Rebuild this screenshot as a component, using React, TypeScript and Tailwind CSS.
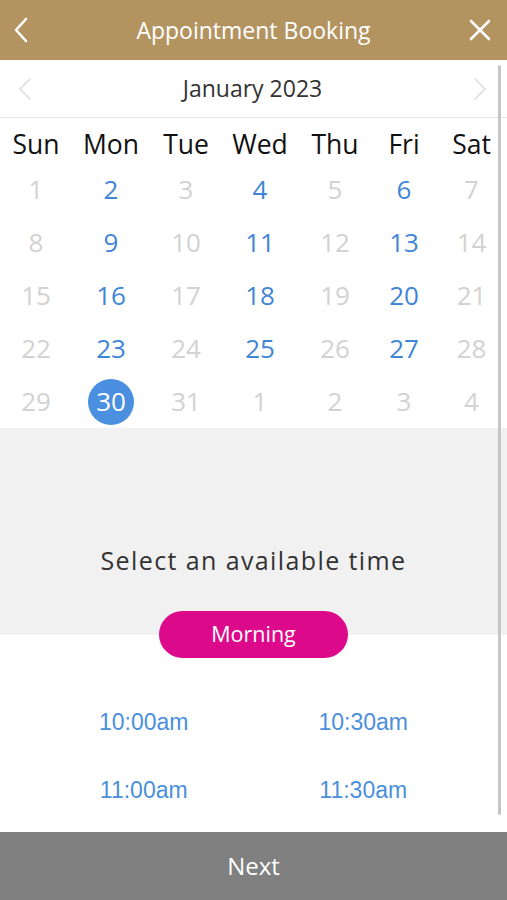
const days = ["Sun", "Mon", "Tue", "Wed", "Thu", "Fri", "Sat"];

type Cell = { n: number; on?: boolean; sel?: boolean };

const weeks: Cell[][] = [
  [{ n: 1 }, { n: 2, on: true }, { n: 3 }, { n: 4, on: true }, { n: 5 }, { n: 6, on: true }, { n: 7 }],
  [{ n: 8 }, { n: 9, on: true }, { n: 10 }, { n: 11, on: true }, { n: 12 }, { n: 13, on: true }, { n: 14 }],
  [{ n: 15 }, { n: 16, on: true }, { n: 17 }, { n: 18, on: true }, { n: 19 }, { n: 20, on: true }, { n: 21 }],
  [{ n: 22 }, { n: 23, on: true }, { n: 24 }, { n: 25, on: true }, { n: 26 }, { n: 27, on: true }, { n: 28 }],
  [{ n: 29 }, { n: 30, sel: true }, { n: 31 }, { n: 1 }, { n: 2 }, { n: 3 }, { n: 4 }],
];

const times = ["10:00am", "10:30am", "11:00am", "11:30am"];

export default function App() {
  return (
    <div className="flex h-[900px] w-[507px] flex-col bg-white font-['Open_Sans',sans-serif]">
      {/* Header */}
      <div className="flex h-[60px] shrink-0 items-center justify-between bg-[#b39461] px-[13px] text-white">
        <div className="flex w-[34px] justify-start">
          <svg width="16" height="26" viewBox="0 0 16 26" fill="none">
            <path d="M13 2 L3 13 L13 24" stroke="white" strokeWidth="2.6" strokeLinecap="round" strokeLinejoin="round" />
          </svg>
        </div>
        <span className="text-[23px] leading-none">Appointment Booking</span>
        <div className="flex w-[34px] justify-end">
          <svg width="24" height="24" viewBox="0 0 24 24" fill="none" className="mr-[2px]">
            <path d="M3 3 L21 21 M21 3 L3 21" stroke="white" strokeWidth="2.6" strokeLinecap="round" />
          </svg>
        </div>
      </div>

      {/* Body */}
      <div className="relative flex-1">
        <div className="flex h-[58px] items-center justify-between border-b border-[#e6e6e6] px-[18px]">
          <svg width="14" height="24" viewBox="0 0 14 24" fill="none">
            <path d="M12 2 L2 12 L12 22" stroke="#dcdcdc" strokeWidth="1.6" strokeLinecap="round" strokeLinejoin="round" />
          </svg>
          <span className="text-[23px] text-[#333333]">January 2023</span>
          <svg width="14" height="24" viewBox="0 0 14 24" fill="none" className="mr-[2px]">
            <path d="M2 2 L12 12 L2 22" stroke="#dcdcdc" strokeWidth="1.6" strokeLinecap="round" strokeLinejoin="round" />
          </svg>
        </div>

        <div className="grid h-[45px] grid-cols-[72px_78px_72px_76px_74px_64px_71px] items-center pt-[7px]">
          {days.map((d) => (
            <div key={d} className="text-center text-[26.5px] leading-none text-[#111111]">
              {d}
            </div>
          ))}
        </div>

        {weeks.map((w, i) => (
          <div key={i} className="grid h-[53px] grid-cols-[72px_78px_72px_76px_74px_64px_71px] items-center">
            {w.map((c, j) => (
              <div key={j} className="flex justify-center">
                {c.sel ? (
                  <span className="flex h-[46px] w-[46px] items-center justify-center rounded-full bg-[#4a8fe0] text-[26px] text-white">
                    {c.n}
                  </span>
                ) : (
                  <span className={c.on ? "text-[26px] text-[#3f86d6]" : "text-[26px] text-[#d2d2d2]"}>
                    {c.n}
                  </span>
                )}
              </div>
            ))}
          </div>
        ))}

        {/* Time section */}
        <div className="flex flex-col items-center bg-[#f1f1f1] pt-[116px]">
          <span className="text-[25px] leading-[32px] tracking-[1.4px] text-[#333333]">
            Select an available time
          </span>
          <div className="relative z-10 mt-[35px] -mb-[23px] flex h-[47px] w-[189px] items-center justify-center rounded-full bg-[#dc0a8a] text-[21.5px] text-white">
            Morning
          </div>
        </div>

        <div className="grid grid-cols-2 px-[34px] pt-[53px] font-['Liberation_Sans',Arial,sans-serif]">
          {times.map((t) => (
            <div key={t} className="flex h-[68px] items-center justify-center text-[23px] text-[#4a8fdc]">
              {t}
            </div>
          ))}
        </div>

        {/* Scrollbar */}
        <div className="absolute right-[6px] top-[5px] h-[750px] w-[3px] rounded-full bg-[#c6c6c6]" />
      </div>

      {/* Footer */}
      <div className="flex h-[68px] shrink-0 items-center justify-center bg-[#808080] text-[24px] text-white">
        Next
      </div>
    </div>
  );
}
